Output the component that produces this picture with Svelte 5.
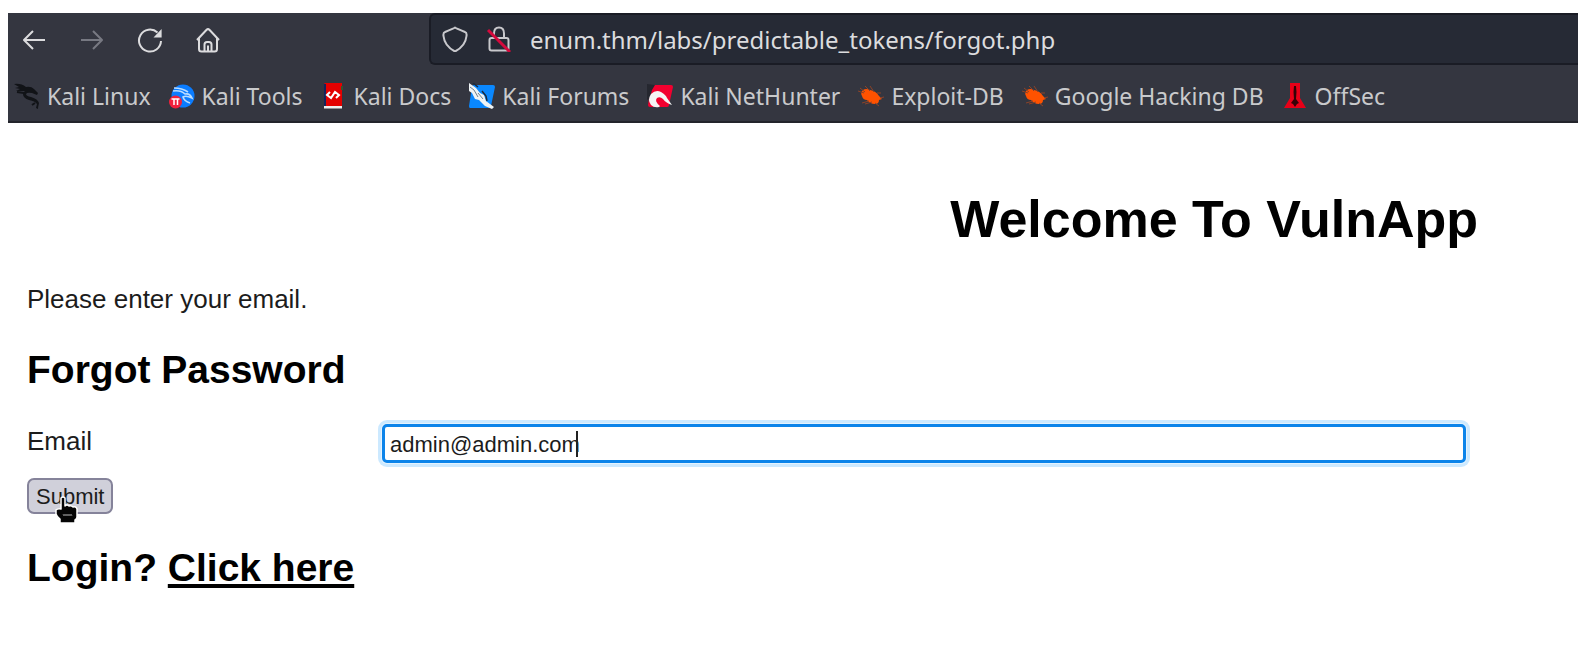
<script lang="ts">
  const bookmarks = [
    { icon: 'dragon', name: 'Kali Linux' },
    { icon: 'tools', name: 'Kali Tools' },
    { icon: 'docs', name: 'Kali Docs' },
    { icon: 'forums', name: 'Kali Forums' },
    { icon: 'nethunter', name: 'Kali NetHunter' },
    { icon: 'exploit', name: 'Exploit-DB' },
    { icon: 'exploit', name: 'Google Hacking DB' },
    { icon: 'offsec', name: 'OffSec' },
  ];

  let address = $state('enum.thm/labs/predictable_tokens/forgot.php');
  let email = $state('admin@admin.com');
</script>

<div class="window">
  <header class="browser">
    <div class="toolbar">
      <nav class="nav-buttons">
        <button aria-label="Back">
          <svg viewBox="0 0 26 26"><path d="M24 13H3M12 4L3 13l9 9" /></svg>
        </button>
        <button aria-label="Forward" disabled>
          <svg viewBox="0 0 26 26"><path d="M2 13h21M14 4l9 9-9 9" /></svg>
        </button>
        <button aria-label="Reload">
          <svg viewBox="0 0 26 26">
            <path d="M20.500 5.500A11 11 0 1 0 24 14" />
            <path d="M24.6 2v8.600H16.500z" fill="currentColor" stroke="none" />
          </svg>
        </button>
        <button aria-label="Home">
          <svg viewBox="0 0 26 26">
            <path d="M2 13L11.600 2.800q1.400-1.400 2.800 0L24 13M4 11.500V22q0 2.500 2.500 2.500h13Q22 24.500 22 22V11.500M9.500 24v-6.500q0-2.500 2.500-2.500h2q2.500 0 2.500 2.500V24M13 18.500V24" />
          </svg>
        </button>
      </nav>

      <div class="address-bar">
        <svg viewBox="0 0 26 26">
          <path d="M13 1.500q1.500 1 10 4.500Q25 6.500 24.500 10q-1 10-11.500 15.500Q2.500 20 1.500 10 1 6.500 3 6q8.500-3.500 10-4.500z" />
        </svg>
        <svg viewBox="0 0 26 26">
          <path d="M8 12V7.500Q8 1.500 13 1.500t5 6V12M5.500 12h15q2 0 2 2v8.500q0 2-2 2h-15q-2 0-2-2V14q0-2 2-2z" />
          <path class="strike" d="M2 4l22 22" />
        </svg>
        <input type="text" aria-label="Address" spellcheck="false" bind:value={address} />
      </div>
    </div>

    <div class="bookmarks">
      {#each bookmarks as bookmark (bookmark.name)}
        <a href="#bookmark">
          <svg viewBox="0 0 26 26">
            {#if bookmark.icon === 'dragon'}
              <path d="M0 1q7-1 12 3 5-1 8 2l4 4-1 2-5-2q-5-1-6 1 0 2 5 3 7 2 8 6-1 4-1 6l-2-1 1-4q-2-3-8-4-6-2-6-6 0-2 2-3L2 8l4-2-5-1 4-1z" fill="#111317" />
              <path d="M3 9l7 1M21 20l-3 2" stroke="#111317" stroke-width="2" fill="none" />
            {:else if bookmark.icon === 'tools'}
              <circle cx="14" cy="13" r="11.500" fill="#0a7cff" />
              <path d="M4 8q8-1 12 3 5-1 7 4-6-3-9-1 1 4 7 6M5 5q8 0 14 4" stroke="#b9dcff" stroke-width="1.600" fill="none" />
              <circle cx="6.500" cy="19" r="6.500" fill="#f0213c" />
              <path d="M2.500 16h8M5 16v6M8.500 16v6" stroke="#fff" stroke-width="1.500" />
            {:else if bookmark.icon === 'docs'}
              <path d="M3 1q0-1 2-1h16v23H3z" fill="#e40000" />
              <path d="M3 1h2v22H3z" fill="#14245c" />
              <path d="M3 23h18v2.500H3z" fill="#eee" />
              <path d="M20 3h2v4h-2z" fill="#36532e" />
              <path d="M9 9l-3 3 4 3 4-6 4 3-3 3" fill="none" stroke="#fff" stroke-width="2" />
            {:else if bookmark.icon === 'forums'}
              <path d="M5 2h19q2 0 2 2l-4 19q0 2-2 2H1q-1 0-1-2L3 4q0-2 2-2z" fill="#0a88ff" />
              <path d="M0 0l7 5 4 5 4 2 2 6 4 3 4 3-2 2-7-3-6-6-4-1-3-6-3-2z" fill="#eef3f5" />
              <path d="M1 4l4 3 4 7M9 10l5 6" stroke="#71818c" fill="none" />
              <path d="M4 0l5 4M13 8l4 5 1 5" stroke="#1c2a3c" stroke-width="1.500" fill="none" />
            {:else if bookmark.icon === 'nethunter'}
              <path d="M5 2h19q2 0 2 2l-4 18q0 2-2 2H3q-2 0-2-2L4 4z" fill="#f2002f" />
              <path d="M0 1l8 1-3 5-2 8-3 2z" fill="#25272f" />
              <path d="M4 22Q0 17 4 11q5-5 10-2 5 3 6 6l5 7q-6-2-9-6-3-3-6-1-3 3 3 8l-1 1q-5 1-8-2z" fill="#f4f4f4" />
            {:else if bookmark.icon === 'exploit'}
              <path d="M5 7q3-2 7 0 6 1 9 6l3 3-3 1q0 4-4 4-5 0-8-4-4 0-5-4-2-3 1-6z" fill="#ff5200" />
              <path d="M7 3l5 5M12 3l4 6M0 8l6 2M4 20l7-2M7 21l7-2M17 20l4 3M19 10l4 0M22 15l4-1M2 5l5 4" stroke="#8c4328" stroke-width="1" />
            {:else}
              <path d="M8 0h10v15l6 10H2l6-10z" fill="#e80018" />
              <path d="M12 3h2q1 6 0 13l3 4-2 1-2 3-2-3-2-1 3-4q-1-7 0-13z" fill="#350207" />
            {/if}
          </svg>
          <span>{bookmark.name}</span>
        </a>
      {/each}
    </div>
  </header>

  <main>
    <h1>Welcome To VulnApp</h1>
    <p>Please enter your email.</p>

    <h2>Forgot Password</h2>
    <form onsubmit={(e: SubmitEvent) => e.preventDefault()}>
      <div class="field">
        <label for="email">Email</label>
        <div class="email-box">
          <input id="email" type="text" spellcheck="false" bind:value={email} />
          <span class="caret"></span>
        </div>
      </div>
      <div class="submit-box">
        <button type="submit">Submit</button>
        <svg class="pointer" viewBox="0 0 24 28">
          <path d="M6 2q2-2 4 0v8q2-2 4 0 2-1 4 1 3-1 4 2v8q0 2-2 3v3H5v-4q-3-2-4-5v-4q2-2 5-1z" fill="#050505" stroke="#fff" stroke-width="1.500" stroke-linejoin="round" />
          <path d="M8 18l1 2 1-2 1 2 1-2 1 2 1-2 1 2 1-2 1 2" fill="none" stroke="#777" />
        </svg>
      </div>
    </form>

    <h2>Login? <a href="#login">Click here</a></h2>
  </main>
</div>

<style>
  :global(body) {
    margin: 0;
    background: #fff;
  }

  .window {
    padding: 13px 7px 0 8px;
    font-family: 'Liberation Sans', Arial, sans-serif;
  }

  .browser {
    background: #343640;
    border-bottom: 2px solid #23242b;
    font-family: 'Noto Sans', sans-serif;
  }

  .browser svg {
    display: block;
    flex: none;
    width: 26px;
    height: 26px;
  }

  .toolbar {
    display: grid;
    grid-template-columns: 421px 1fr;
  }

  .nav-buttons {
    display: flex;
    align-items: center;
    gap: 32px;
    padding: 2px 0 0 13px;
  }

  .nav-buttons button {
    padding: 0;
    border: none;
    background: none;
    color: #dcdcde;
  }

  .nav-buttons button:disabled {
    color: #777982;
  }

  .nav-buttons svg,
  .address-bar svg {
    fill: none;
    stroke: currentColor;
    stroke-width: 2;
    stroke-linejoin: round;
  }

  .address-bar {
    display: flex;
    align-items: center;
    gap: 18px;
    box-sizing: border-box;
    height: 52px;
    padding-left: 11px;
    border: 2px solid #1a1c25;
    border-right: none;
    border-radius: 6px 0 0 6px;
    background: #262a35;
    color: #c8c8cc;
  }

  .address-bar .strike {
    stroke: #d5093c;
    stroke-width: 3;
  }

  .address-bar input {
    flex: 1;
    min-width: 0;
    padding: 2px 0 0;
    border: none;
    outline: none;
    background: none;
    color: #dcdcde;
    font-family: inherit;
    font-size: 24px;
    line-height: 32px;
  }

  .bookmarks {
    display: flex;
    align-items: center;
    gap: 18px;
    box-sizing: border-box;
    height: 56px;
    padding: 6px 6px 0;
    overflow: hidden;
  }

  .bookmarks a {
    display: flex;
    align-items: center;
    gap: 7px;
    color: #c9cacc;
    font-size: 23px;
    line-height: 30px;
    text-decoration: none;
    white-space: nowrap;
  }

  main {
    padding: 66px 20px 40px 19px;
    color: #000;
  }

  h1 {
    margin: 0 80px 35px 0;
    font-size: 52px;
    line-height: 60px;
    text-align: right;
  }

  p {
    margin: 0 0 33px;
    color: #1c1c1c;
    font-size: 26px;
    line-height: 30px;
  }

  h2 {
    margin: 0 0 32px;
    font-size: 39px;
    line-height: 45px;
  }

  h2 a {
    color: inherit;
    text-decoration-thickness: 4px;
    text-underline-offset: 3px;
    text-decoration-skip-ink: none;
  }

  form {
    margin-bottom: 31px;
  }

  .field {
    display: grid;
    grid-template-columns: 355px 1fr;
    align-items: center;
    margin: 0 92px 15px 0;
  }

  label {
    padding-bottom: 6px;
    color: #1c1c1c;
    font-size: 26px;
    line-height: 30px;
  }

  .email-box,
  .submit-box {
    position: relative;
    display: flex;
  }

  .email-box input {
    box-sizing: border-box;
    width: 100%;
    height: 39px;
    padding: 2px 5px 0;
    border: 3px solid #0c84ea;
    border-radius: 5px;
    outline: none;
    box-shadow:
      0 0 0 1px #e4f3ff,
      0 0 0 4px #cce9ff;
    color: #1c1c1c;
    font-family: inherit;
    font-size: 22px;
  }

  .caret {
    position: absolute;
    top: 7px;
    left: 194px;
    width: 2px;
    height: 26px;
    background: #222;
  }

  .submit-box button {
    height: 36px;
    padding: 2px 7px 0;
    border: 2px solid #85839a;
    border-radius: 7px;
    background: #d0d0da;
    color: #1c1c1c;
    font-family: inherit;
    font-size: 22px;
  }

  .pointer {
    position: absolute;
    top: 18px;
    left: 28px;
    width: 24px;
    height: 28px;
  }
</style>
